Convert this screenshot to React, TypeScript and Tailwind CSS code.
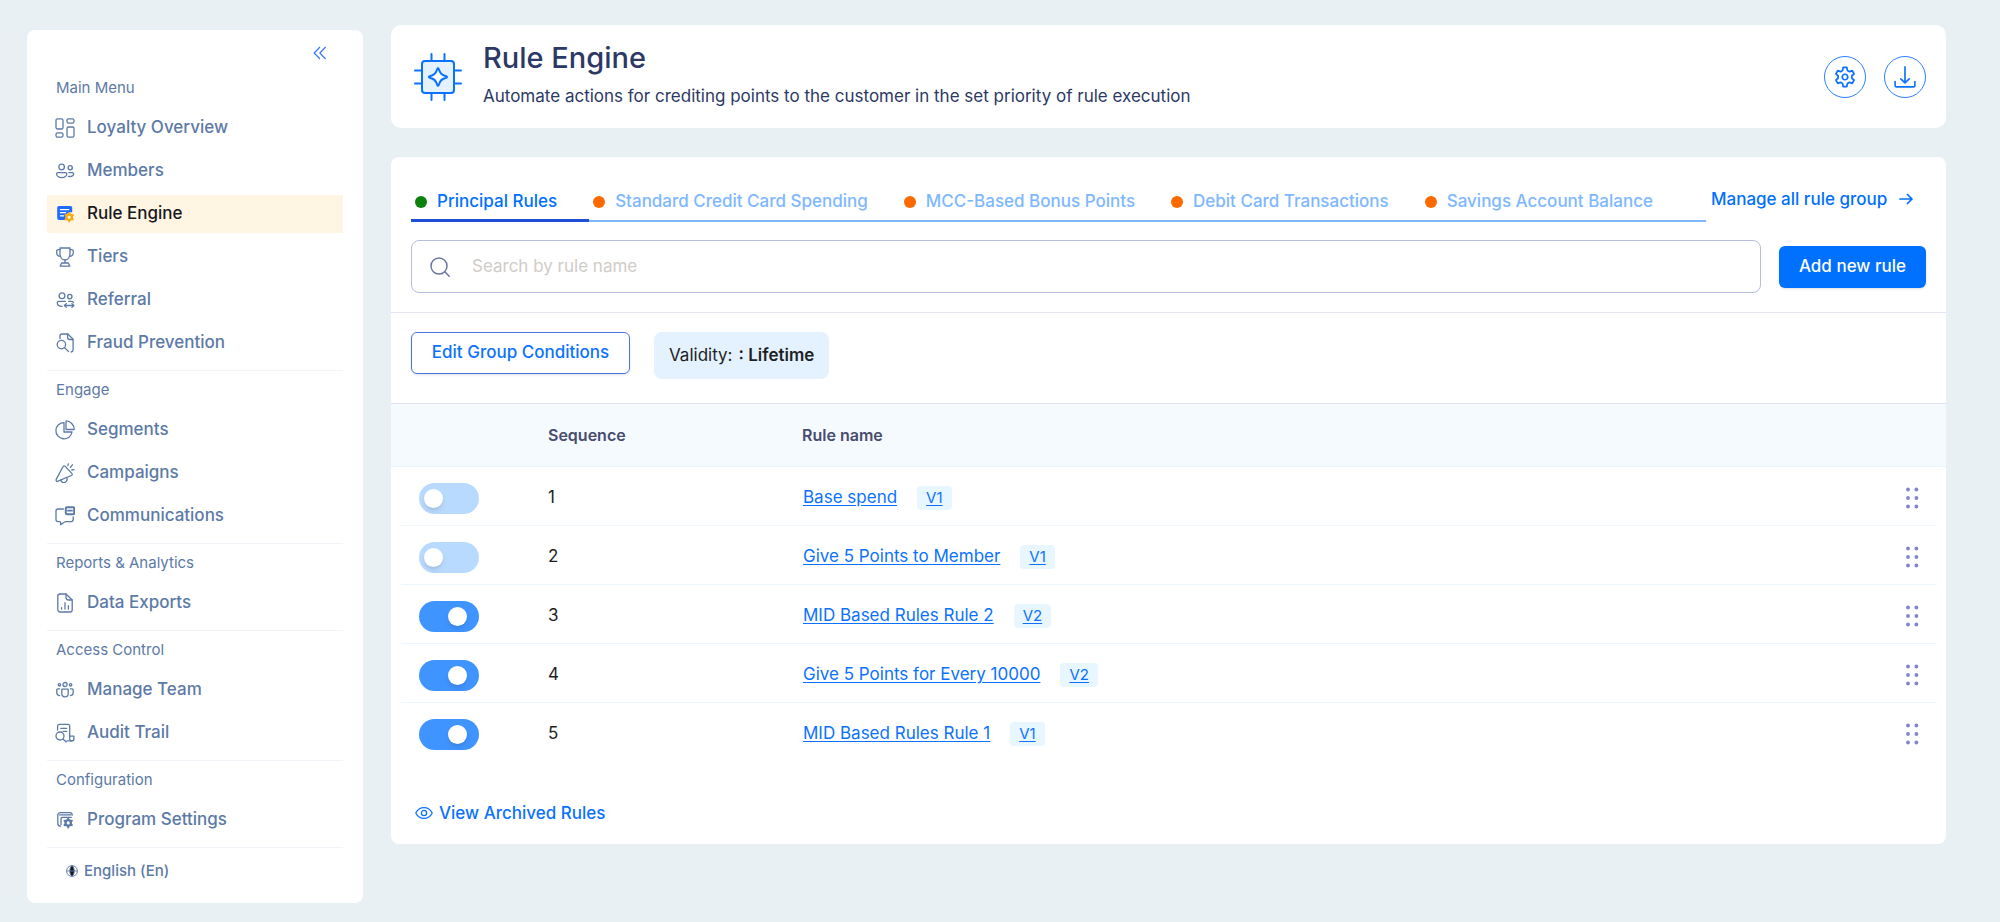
import type { ReactNode } from "react";

type IconProps = { children: ReactNode };

function Icon({ children }: IconProps) {
  return (
    <svg
      viewBox="0 0 20 20"
      fill="none"
      stroke="currentColor"
      strokeWidth="1.3"
      strokeLinecap="round"
      strokeLinejoin="round"
      aria-hidden="true"
      className="size-5 shrink-0"
    >
      {children}
    </svg>
  );
}

const OverviewIcon = (
  <Icon>
    <rect x="1" y="0.8" width="7" height="10.2" rx="1.6" />
    <rect x="12" y="0.8" width="7" height="4.4" rx="1.6" />
    <rect x="1" y="14.8" width="7" height="4.4" rx="1.6" />
    <rect x="12" y="9" width="7" height="10.2" rx="1.6" />
  </Icon>
);

const MembersIcon = (
  <Icon>
    <circle cx="6.6" cy="6" r="2.8" />
    <circle cx="15.2" cy="6.8" r="2.1" />
    <path d="M3 11.6h7.400c.9 0 1.400.5 1.400 1.200 0 2-2 3.800-5.100 3.800s-5.100-1.800-5.100-3.800c0-.7.5-1.200 1.400-1.200Z" />
    <path d="M13.800 11.600h3.400c.9 0 1.400.5 1.400 1.100 0 1.500-1.400 2.800-4 2.800-.4 0-.8 0-1.100-.1" />
  </Icon>
);

const RuleIcon = (
  <Icon>
    <path
      d="M4 2h11.400c1 0 1.800.8 1.800 1.800v4.600c-3.600-.4-6.400 1.800-6.600 4.600 0 1.100.2 2.100.7 3H4a1.800 1.800 0 0 1-1.800-1.800V3.800C2.200 2.800 3 2 4 2Z"
      fill="#1d6bff"
      stroke="none"
    />
    <path d="M5.400 5.600h8.400M5.400 8.700h5.200M5.400 11.800h3.200" stroke="#fff" strokeWidth="1.3" />
    <circle cx="14.200" cy="13.200" r="2.700" stroke="#f9ab0e" strokeWidth="2.300" />
    <path
      d="M14.200 8.900v1.200M14.200 16.300v1.200M10.400 11l1.100.7M16.900 14.700l1.100.7M10.400 15.400l1.100-.7M16.900 11.700l1.100-.7"
      stroke="#f9ab0e"
      strokeWidth="1.800"
    />
  </Icon>
);

const TrophyIcon = (
  <Icon>
    <path d="M5 1h10v5.600c0 3.600-2 6.400-5 6.400S5 10.200 5 6.600V1Z" />
    <path d="M5 2.600H3.400c-1 0-1.700.7-1.700 1.700v1.500c0 2 1.600 3.400 3.800 3.600M15 2.600h1.600c1 0 1.700.7 1.700 1.700v1.500c0 2-1.600 3.400-3.800 3.600" />
    <path d="M10 13v3M6.600 16h6.800l1.400 3.200H5.200L6.600 16Z" />
  </Icon>
);

const ReferralIcon = (
  <Icon>
    <circle cx="7" cy="5.800" r="2.900" />
    <circle cx="14.800" cy="6.600" r="2.200" />
    <path d="M10.400 11.400H3.700c-.9 0-1.400.6-1.400 1.300 0 2 1.900 3.700 4.800 3.700M13.600 11.400h3.200c.9 0 1.500.5 1.600 1.200" />
    <path d="M9.600 15.500h9M11.300 13.600l-2 1.900 2 1.900M16.900 13.600l2 1.900-2 1.900" />
  </Icon>
);

const FraudIcon = (
  <Icon>
    <path d="M5 5.600V3c0-1.100.8-2 1.900-2h6l5.200 5.200v10.600c0 1.100-.8 2-1.900 2.200" />
    <path d="M12.600 1.200V4.600c0 1.100.8 1.900 1.900 1.900h3.400" />
    <circle cx="6.400" cy="11.600" r="4.200" />
    <path d="m9.600 14.800 4 3.800" />
  </Icon>
);

const SegmentsIcon = (
  <Icon>
    <path d="M9 2.600a8.100 8.100 0 1 0 8 9.400H9V2.600Z" />
    <path d="M11 .9v8.600h8.200C19.200 4.800 15.500.9 11 .9Z" />
  </Icon>
);

const CampaignIcon = (
  <Icon>
    <path d="M8 3.800c.5-1.100 1.400-1.200 2.200-.4l6.600 7c.8.9.5 1.700-.5 2.100L3 18.200c-1.300.5-2.300-.5-1.800-1.800L8 3.800Z" />
    <path d="M5.800 17.200c.4 2.400 3 2.900 4.700 1.800 1.600-.9 1.900-2.500 1.300-4.300M12.900 2.600l.4-1.800M15.400 4.400l2-2.600M16.800 7l2.200-.4" />
  </Icon>
);

const CommunicationIcon = (
  <Icon>
    <path d="M8.400 3H3a2 2 0 0 0-2 2v8.600a2 2 0 0 0 2 2h1.600c.7 0 1 .4 1 1v2.200l4-2.800c.4-.3.8-.4 1.200-.4h5.400a2 2 0 0 0 2-2V11" />
    <rect x="10.800" y="1.200" width="8.400" height="7" rx="1.200" strokeWidth="2" />
    <path d="M13 4.700h4" strokeWidth="1.800" />
  </Icon>
);

const ExportIcon = (
  <Icon>
    <path d="M11 1H5a2.200 2.200 0 0 0-2.200 2.200v13.600A2.200 2.200 0 0 0 5 19h10a2.200 2.200 0 0 0 2.200-2.200V7L11 1Z" />
    <path d="M11 1v3.600C11 6 12 7 13.400 7h3.800M6.600 14.600V16M10 9.600V16M13.400 12.600V16" />
  </Icon>
);

const TeamIcon = (
  <Icon>
    <circle cx="10" cy="4.600" r="2.100" />
    <circle cx="4.400" cy="4.800" r="1.200" />
    <circle cx="15.600" cy="4.800" r="1.200" />
    <path d="M6.800 9.200h6.400v4.400c0 2-1.300 3.300-3.200 3.300s-3.200-1.300-3.200-3.300V9.200Z" />
    <path d="M4.600 8.800H2.900c-.7 0-1.100.4-1.100 1.100v2.700c0 1.700 1 2.900 2.800 3M15.400 8.800h1.700c.7 0 1.100.4 1.100 1.100v2.700c0 1.700-1 2.900-2.800 3" />
  </Icon>
);

const AuditIcon = (
  <Icon>
    <path d="M2.600 7V3.300C2.600 2.100 3.400 1.400 4.500 1.400h8.300c1.200 0 1.900.8 1.900 1.900V16c0 1 .8 1.900 2 1.900s2.200-.8 2.200-2v-2.700h-4.200" />
    <path d="M5.800 5.400h5.800M8.200 8.400h3.400M16.700 17.900H12" />
    <circle cx="5" cy="13" r="4" />
    <path d="m8 16 3.200 3" />
  </Icon>
);

const ProgramIcon = (
  <Icon>
    <path d="M5.600 16.200A2.800 2.800 0 0 1 2.800 13.400V5.200A2.600 2.600 0 0 1 5.400 2.600h9.200a2.600 2.600 0 0 1 2.600 2.600" />
    <path d="M4.600 4.900h11M6 14.600V9c0-1 .6-1.700 1.700-1.700h8.600" />
    <circle cx="13.200" cy="12.900" r="2.700" strokeWidth="2.300" />
    <path
      d="M13.200 8.600v1M13.200 16.200v1.200M9.500 10.700l1 .6M15.900 14.500l1 .6M9.500 15.100l1-.6M15.900 11.300l1-.6"
      strokeWidth="2"
    />
  </Icon>
);

type NavItem = { label: string; icon: ReactNode; active?: boolean };
const sections: { title: string; items: NavItem[] }[] = [
  {
    title: "Main Menu",
    items: [
      { label: "Loyalty Overview", icon: OverviewIcon },
      { label: "Members", icon: MembersIcon },
      { label: "Rule Engine", icon: RuleIcon, active: true },
      { label: "Tiers", icon: TrophyIcon },
      { label: "Referral", icon: ReferralIcon },
      { label: "Fraud Prevention", icon: FraudIcon },
    ],
  },
  {
    title: "Engage",
    items: [
      { label: "Segments", icon: SegmentsIcon },
      { label: "Campaigns", icon: CampaignIcon },
      { label: "Communications", icon: CommunicationIcon },
    ],
  },
  { title: "Reports & Analytics", items: [{ label: "Data Exports", icon: ExportIcon }] },
  {
    title: "Access Control",
    items: [
      { label: "Manage Team", icon: TeamIcon },
      { label: "Audit Trail", icon: AuditIcon },
    ],
  },
  { title: "Configuration", items: [{ label: "Program Settings", icon: ProgramIcon }] },
];

function Sidebar() {
  return (
    <aside className="flex w-[336px] shrink-0 flex-col rounded-lg bg-white px-5 pb-5 text-[#5c7aa6]">
      <div className="flex justify-end pt-3 pr-3">
        <button type="button" aria-label="Collapse menu" className="p-1 text-[#3b78f5]">
          <svg viewBox="0 0 14 14" fill="none" stroke="currentColor" strokeWidth="1.2" className="size-[14px]" aria-hidden="true">
            <path d="M7 1 1.200 7 7 13M12.600 1 6.800 7l5.800 6" />
          </svg>
        </button>
      </div>
      <nav aria-label="Main" className="pt-[5px]">
        {sections.map((section) => (
          <section key={section.title} className="border-b border-[#f1f3f8] pt-[9px] pb-2">
            <h2 className="px-[9px] text-[15px] leading-5">{section.title}</h2>
            <ul className="flex flex-col gap-[5px] pt-[11px]">
              {section.items.map((item) => (
                <li key={item.label}>
                  <a
                    href="#"
                    aria-current={item.active ? "page" : undefined}
                    className={`flex h-[38px] items-center gap-3 px-2 text-[17px] font-medium ${item.active ? "bg-[#fff5e2] text-[#16181d]" : ""}`}
                  >
                    {item.icon}
                    {item.label}
                  </a>
                </li>
              ))}
            </ul>
          </section>
        ))}
      </nav>
      <button type="button" className="mt-[11px] flex items-center gap-[6px] self-start px-[19px] text-[15px] leading-6 font-medium">
        <svg viewBox="0 0 12 12" fill="none" stroke="currentColor" strokeWidth="0.9" className="size-3" aria-hidden="true">
          <circle cx="6" cy="6" r="5.400" />
          <path d="M6 .6C3 3 3 9 6 11.400 9 9 9 3 6 .6Z" fill="#16181d" />
          <path d="M.6 6h10.800" />
        </svg>
        English (En)
      </button>
    </aside>
  );
}

function Header() {
  return (
    <header className="flex h-[103px] items-center rounded-[10px] bg-white pr-5 pl-[22px]">
      <svg
        viewBox="0 0 50 50"
        fill="none"
        stroke="#0b72ff"
        strokeWidth="2"
        strokeLinecap="round"
        strokeLinejoin="round"
        className="size-[50px] shrink-0"
        aria-hidden="true"
      >
        <rect x="9" y="9" width="32" height="32" rx="3" fill="#e4f1ff" />
        <path d="M18.500 9V2M31.500 9V2M18.500 48v-7M31.500 48v-7M9 18.500H2M9 31.500H2M48 18.500h-7M48 31.500h-7" />
        <path
          d="M25 16c.6 0 .9 1.300 1.500 3 1 2.700 2 3.700 4.500 4.500 1.800.6 3.200.9 3.200 1.500s-1.400.9-3.200 1.500c-2.500.8-3.500 1.800-4.500 4.500-.6 1.700-.9 3-1.500 3s-.9-1.300-1.500-3c-1-2.700-2-3.700-4.500-4.500-1.800-.6-3.200-.9-3.200-1.500s1.400-.9 3.200-1.500c2.500-.8 3.500-1.800 4.500-4.500.6-1.700.9-3 1.500-3Z"
          fill="#fff"
        />
      </svg>
      <div className="flex-1 pl-5 text-[#2c3965]">
        <h1 className="text-[29px] leading-9 font-medium">Rule Engine</h1>
        <p className="pt-[6px] pb-1 text-[17px] leading-7">
          Automate actions for crediting points to the customer in the set priority of rule execution
        </p>
      </div>
      <div className="flex gap-[18px] text-[#0b72ff]">
        <button type="button" aria-label="Settings" className="flex size-[42px] items-center justify-center rounded-full border border-[#2f80ff]">
          <svg viewBox="-12 -12 24 24" fill="none" stroke="currentColor" strokeWidth="1.9" strokeLinejoin="round" className="size-[22px]" aria-hidden="true">
            <path d="M-2.600-7.200-2-10.500H2L2.600-7.200 4.940-5.850 7.920-6.880 9.920-3.420 7.540-1.350V1.350L9.920 3.420 7.920 6.880 4.940 5.850 2.600 7.200 2 10.500H-2L-2.600 7.200-4.940 5.850-7.920 6.880-9.920 3.420-7.540 1.350V-1.350L-9.920-3.420-7.920-6.880-4.940-5.850Z" />
            <circle r="3" />
          </svg>
        </button>
        <button type="button" aria-label="Download" className="flex size-[42px] items-center justify-center rounded-full border border-[#2f80ff]">
          <svg viewBox="0 0 24 24" fill="none" stroke="currentColor" strokeWidth="1.8" strokeLinecap="round" strokeLinejoin="round" className="size-[22px]" aria-hidden="true">
            <path d="M12 1v17.200M7.400 14l4.600 4.400 4.600-4.400M1.200 17v4.200c0 1 .6 1.600 1.600 1.600h18.400c1 0 1.600-.6 1.600-1.600V17" />
          </svg>
        </button>
      </div>
    </header>
  );
}

const tabs = [
  { label: "Principal Rules", active: true },
  { label: "Standard Credit Card Spending" },
  { label: "MCC-Based Bonus Points" },
  { label: "Debit Card Transactions" },
  { label: "Savings Account Balance" },
];

function Tabs() {
  return (
    <div className="flex items-start px-5 pt-6">
      <div role="tablist" aria-label="Rule groups" className="flex h-[41px] w-[1295px] border-b-2 border-[#7db8ff]">
        {tabs.map((tab) => (
          <button
            key={tab.label}
            type="button"
            role="tab"
            aria-selected={Boolean(tab.active)}
            className={`-mb-[2px] flex items-center gap-[10px] border-b-3 pt-1 pr-8 pl-1 text-[17px] font-medium whitespace-nowrap ${
              tab.active ? "border-[#1d4fd8] text-[#0070ff]" : "border-transparent text-[#7db8ff]"
            }`}
          >
            <span className={`size-3 rounded-full ${tab.active ? "bg-[#0b800b]" : "bg-[#fb6a00]"}`} />
            {tab.label}
          </button>
        ))}
      </div>
      <a href="#" className="flex items-center gap-3 pt-[6px] pl-[5px] text-[17px] leading-6 font-medium whitespace-nowrap text-[#0070ff]">
        Manage all rule group
        <svg viewBox="0 0 14 14" fill="none" stroke="currentColor" strokeWidth="1.7" strokeLinecap="round" strokeLinejoin="round" className="size-[14px]" aria-hidden="true">
          <path d="M1 7h12M8.500 2.500 13 7l-4.500 4.500" />
        </svg>
      </a>
    </div>
  );
}

const rules = [
  { name: "Base spend", version: "V1", enabled: false },
  { name: "Give 5 Points to Member", version: "V1", enabled: false },
  { name: "MID Based Rules Rule 2", version: "V2", enabled: true },
  { name: "Give 5 Points for Every 10000", version: "V2", enabled: true },
  { name: "MID Based Rules Rule 1", version: "V1", enabled: true },
];

function RulesTable() {
  return (
    <table className="w-full table-fixed border-collapse text-left">
      <colgroup>
        <col className="w-[157px]" />
        <col className="w-[254px]" />
        <col />
        <col className="w-[80px]" />
      </colgroup>
      <thead className="border-t border-b border-t-[#dfe1ee] border-b-[#e8f4fe] bg-[#f5fafe]">
        <tr className="h-[63px] text-base text-[#484c70]">
          <td />
          <th scope="col" className="font-semibold">Sequence</th>
          <th scope="col" className="font-semibold">Rule name</th>
          <td />
        </tr>
      </thead>
      <tbody className="text-[17px]">
        {rules.map((rule, i) => (
          <tr key={rule.name} className="group">
            <td className="p-0 pl-[10px]">
              <div className="flex h-[59px] items-center border-b border-[#edf5fd] pt-1 pl-[18px] group-last:border-transparent">
                <input
                  type="checkbox"
                  role="switch"
                  aria-label={`Enable ${rule.name}`}
                  defaultChecked={rule.enabled}
                  className="flex h-[31px] w-[60px] cursor-pointer appearance-none items-center rounded-full bg-[#b9daff] px-[5px] before:size-[19px] before:rounded-full before:bg-white before:shadow-md checked:justify-end checked:bg-[#4094ff] checked:px-3"
                />
              </div>
            </td>
            <td className="p-0">
              <div className="flex h-[59px] items-center border-b border-[#edf5fd] pt-1 text-[#1d1f24] group-last:border-transparent">{i + 1}</div>
            </td>
            <td className="p-0">
              <div className="flex h-[59px] items-center gap-5 border-b border-[#edf5fd] pt-1 pl-px text-[#0b72ff] group-last:border-transparent">
                <a href="#" className="underline underline-offset-2">{rule.name}</a>
                <a href="#" className="rounded bg-[#e8f6ff] px-[9px] text-[15px] leading-6 underline underline-offset-2">{rule.version}</a>
              </div>
            </td>
            <td className="p-0 pr-[10px]">
              <div className="flex h-[59px] items-center justify-end border-b border-[#edf5fd] pt-1 pr-4 group-last:border-transparent">
                <button type="button" aria-label={`Reorder ${rule.name}`} className="cursor-grab">
                  <svg viewBox="0 0 16 24" fill="#8085cc" className="h-6 w-4" aria-hidden="true">
                    <circle cx="4" cy="3.500" r="1.900" />
                    <circle cx="12.400" cy="3.500" r="1.900" />
                    <circle cx="4" cy="12" r="1.900" />
                    <circle cx="12.400" cy="12" r="1.900" />
                    <circle cx="4" cy="20.500" r="1.900" />
                    <circle cx="12.400" cy="20.500" r="1.900" />
                  </svg>
                </button>
              </div>
            </td>
          </tr>
        ))}
      </tbody>
    </table>
  );
}

export default function App() {
  return (
    <div className="flex min-h-screen items-start gap-7 bg-[#e8f0f3] pr-[54px] pb-5 pl-[27px] font-['Inter',sans-serif]">
      <div className="flex pt-[30px]">
        <Sidebar />
      </div>
      <main className="flex min-w-0 flex-1 flex-col gap-[29px] pt-[25px]">
        <Header />
        <section aria-label="Rules" className="rounded-lg bg-white">
          <Tabs />
          <div className="flex items-center gap-[18px] border-b border-[#e3e4f1] px-5 pt-[18px] pb-[19px]">
            <div className="flex h-[53px] flex-1 items-center gap-[22px] rounded-lg border border-[#b9bde0] px-[18px]">
              <svg viewBox="0 0 20 20" fill="none" stroke="#6b76a0" strokeWidth="1.5" strokeLinecap="round" className="size-5 shrink-0" aria-hidden="true">
                <circle cx="9" cy="9" r="8" />
                <path d="m14.800 14.800 4.400 4.400" />
              </svg>
              <input
                type="search"
                aria-label="Search by rule name"
                placeholder="Search by rule name"
                className="min-w-0 flex-1 text-[17px] outline-none placeholder:text-[#d0ccc8]"
              />
            </div>
            <button type="button" className="h-[42px] w-[147px] rounded-md bg-[#0070ff] text-[17px] font-medium text-white shadow-sm">
              Add new rule
            </button>
          </div>
          <div className="flex items-start gap-6 px-5 pt-[19px] pb-6">
            <button type="button" className="h-[42px] w-[219px] rounded-md border border-[#4a74e0] text-[17px] font-medium text-[#0b72ff] shadow-sm">
              Edit Group Conditions
            </button>
            <p className="flex h-[47px] items-center gap-[6px] rounded-lg bg-[#e4f2ff] px-[15px] text-[17px] text-[#1d1f24]">
              <span>Validity:</span>
              <b className="font-semibold">: Lifetime</b>
            </p>
          </div>
          <RulesTable />
          <div className="px-6 pt-[39px] pb-[18px]">
            <a href="#" className="inline-flex items-center gap-[6px] text-[17px] leading-6 font-medium text-[#0b72ff]">
              <svg viewBox="0 0 18 14" fill="none" stroke="currentColor" strokeWidth="1.3" strokeLinejoin="round" className="h-[14px] w-[18px]" aria-hidden="true">
                <path d="M.8 7C2.600 3.400 5.500 1.600 9 1.600S15.400 3.400 17.200 7C15.400 10.600 12.500 12.400 9 12.400S2.600 10.600.8 7Z" />
                <circle cx="9" cy="7" r="2.600" />
              </svg>
              View Archived Rules
            </a>
          </div>
        </section>
      </main>
    </div>
  );
}
